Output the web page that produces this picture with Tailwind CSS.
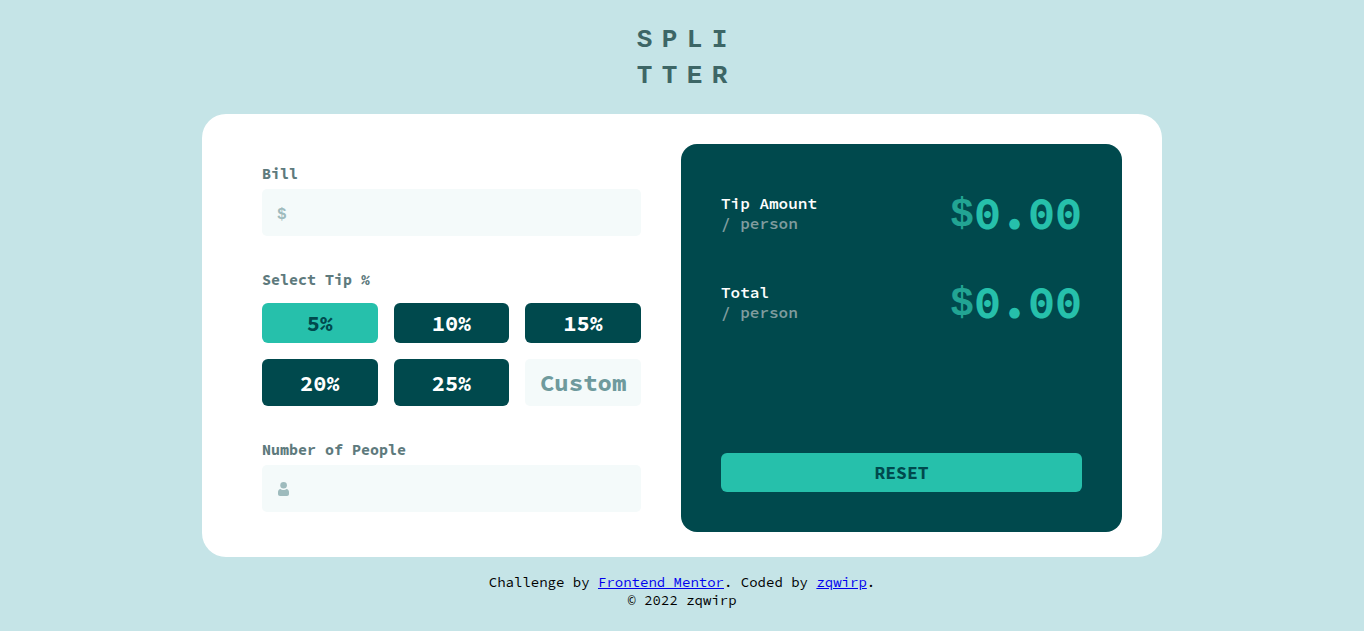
<!DOCTYPE html>
<html lang="en">
<head>
<meta charset="utf-8">
<meta name="viewport" content="width=device-width, initial-scale=1">
<title>Splitter</title>
<script src="https://cdn.jsdelivr.net/npm/@tailwindcss/browser@4"></script>
</head>
<body class="min-h-screen bg-[#c5e4e7] px-4 font-['Source_Code_Pro','Liberation_Mono',monospace] text-[#00494d]">
<header class="flex justify-center pt-[22px]">
  <h1 aria-label="Splitter" class="grid grid-cols-4 text-center font-['Liberation_Mono',monospace] text-[26px] leading-9 font-bold text-[#3d6666]">
    <span class="w-[25px]">S</span><span class="w-[25px]">P</span><span class="w-[25px]">L</span><span class="w-[25px]">I</span>
    <span class="w-[25px]">T</span><span class="w-[25px]">T</span><span class="w-[25px]">E</span><span class="w-[25px]">R</span>
  </h1>
</header>

<main class="mx-auto mt-5 grid max-w-[960px] gap-10 rounded-3xl bg-white px-10 pt-[30px] pb-[25px] md:grid-cols-[379fr_441fr] md:pl-[60px]">
  <form class="py-5">
    <label for="bill" class="block text-[15px] leading-5 font-bold text-[#5e7a7d]">Bill</label>
    <div class="mt-[5px] flex h-[47px] items-center rounded-[5px] bg-[#f4fafa] px-[15px]">
      <span class="pt-1 font-['Liberation_Mono',monospace] text-base font-bold text-[#9ebbbd]">$</span>
      <input id="bill" type="text" inputmode="decimal" class="h-full min-w-0 flex-1 bg-transparent text-right text-2xl font-bold outline-none">
    </div>

    <fieldset class="mt-[34px]">
      <legend class="text-[15px] leading-5 font-bold text-[#5e7a7d]">Select Tip %</legend>
      <div class="mt-[13px] grid grid-cols-3 gap-4 text-[22px] font-bold text-white">
        <button type="button" class="h-10 rounded-md bg-[#26c0ab] text-[#00494d]">5%</button>
        <button type="button" class="h-10 rounded-md bg-[#00494d]">10%</button>
        <button type="button" class="h-10 rounded-md bg-[#00494d]">15%</button>
        <button type="button" class="h-[47px] rounded-md bg-[#00494d] pt-0.5">20%</button>
        <button type="button" class="h-[47px] rounded-md bg-[#00494d] pt-0.5">25%</button>
        <input type="text" inputmode="decimal" aria-label="Custom tip" placeholder="Custom" class="h-[47px] w-full min-w-0 rounded-[5px] bg-[#f4fafa] text-center text-2xl text-[#00494d] outline-none placeholder:text-[#6f9a9d]">
      </div>
    </fieldset>

    <label for="people" class="mt-[34px] block text-[15px] leading-5 font-bold text-[#5e7a7d]">Number of People</label>
    <div class="mt-[5px] flex h-[47px] items-center rounded-[5px] bg-[#f4fafa] px-4">
      <svg class="h-[14px] w-[11px]" viewBox="0 0 11 14" fill="#9ebbbd" aria-hidden="true">
        <circle cx="5.6" cy="3.3" r="3.3"/>
        <path d="M2.5 6.9C3.3 7.7 4.4 8 5.5 8S7.700 7.700 8.500 6.900C10 6.900 11 8.300 11 10.100V12C11 13.200 10.200 14 9 14H2C.8 14 0 13.200 0 12V10.100C0 8.300 1 6.900 2.500 6.900Z"/>
      </svg>
      <input id="people" type="text" inputmode="numeric" class="h-full min-w-0 flex-1 bg-transparent text-right text-2xl font-bold outline-none">
    </div>
  </form>

  <section aria-label="Result" class="flex flex-col rounded-2xl bg-[#00494d] p-10">
    <div class="flex h-[58px] items-center justify-between">
      <h2 class="text-base leading-5 font-semibold text-white">Tip Amount<span class="block text-[#7f9c9e]">/ person</span></h2>
      <p class="flex h-[58px] items-start text-[45px] leading-[58px] font-bold text-[#26c0ab]"><span class="pt-[3px] font-['Liberation_Mono',monospace] text-[40px] leading-[58px] text-[#22a493]">$</span>0.00</p>
    </div>
    <div class="mt-[31px] flex h-[58px] items-center justify-between">
      <h2 class="text-base leading-5 font-semibold text-white">Total<span class="block text-[#7f9c9e]">/ person</span></h2>
      <p class="flex h-[58px] items-start text-[45px] leading-[58px] font-bold text-[#26c0ab]"><span class="pt-[3px] font-['Liberation_Mono',monospace] text-[40px] leading-[58px] text-[#22a493]">$</span>0.00</p>
    </div>
    <button type="button" class="mt-auto h-[39px] w-full rounded-md bg-[#26c0ab] text-lg font-bold text-[#00494d]">RESET</button>
  </section>
</main>

<footer class="mt-4 text-center text-sm leading-[18px] text-black">
  <p>Challenge by <a href="#" class="text-[#0000ee] underline">Frontend Mentor</a>. Coded by <a href="#" class="text-[#0000ee] underline">zqwirp</a>.</p>
  <p>© 2022 zqwirp</p>
</footer>
</body>
</html>
